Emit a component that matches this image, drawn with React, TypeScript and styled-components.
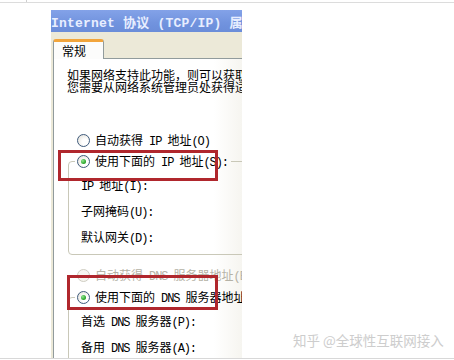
import styled, { createGlobalStyle } from "styled-components";

const GlobalStyle = createGlobalStyle`
  html, body {
    margin: 0;
    padding: 0;
    background: #fff;
  }
  body {
    font-family: "Noto Sans CJK SC", "Liberation Sans", sans-serif;
    color: #000;
  }
`;

const Page = styled.div`
  position: relative;
  width: 454px;
  height: 360px;
  overflow: hidden;
  background: #fff;
  display: flex;
  flex-direction: column;
`;

const TopRule = styled.div`
  height: 2px;
  border-bottom: 1px solid #dcdcdc;
  display: flex;
`;

const Tick = styled.span`
  width: 26px;
  border-right: 1px solid #cfcfcf;
`;

const BottomRule = styled.div`
  border-top: 1px solid #d8d8d8;
`;

const Dialog = styled.div`
  position: relative;
  margin: 7px 0 0 51px;
  width: 191px;
  height: 348px;
  overflow: hidden;
  background: #ece9d8;
  display: flex;
  flex-direction: column;
`;

const TitleBar = styled.div`
  height: 22px;
  flex: none;
  display: flex;
  align-items: center;
  white-space: nowrap;
  background: linear-gradient(#83a2e8, #7193de 60%, #6b8dd9);
  color: #e8eeff;
  font-family: "Liberation Mono", "Noto Sans CJK SC", monospace;
  font-weight: bold;
  font-size: 13px;
  letter-spacing: 0.2px;
`;

const Body = styled.div`
  flex: 1;
  padding-left: 2px;
  display: flex;
  flex-direction: column;
`;

const TabStrip = styled.div`
  height: 26px;
  flex: none;
  display: flex;
  align-items: flex-end;
`;

const Tab = styled.div`
  position: relative;
  z-index: 1;
  box-sizing: border-box;
  width: 51px;
  height: 20px;
  margin-bottom: -1px;
  padding: 1px 0 0 8px;
  background: #fcfcfb;
  border: 1px solid #919b9c;
  border-bottom: none;
  border-top: 3px solid #f2a53c;
  border-radius: 3px 3px 0 0;
  font-size: 12px;
  line-height: 15px;
`;

const Panel = styled.div`
  flex: 1;
  border-left: 1px solid #919b9c;
  border-top: 1px solid #919b9c;
  background: linear-gradient(to right, #fff 85%, #f6f5f0);
  padding: 10px 0 0 13px;
  display: flex;
  flex-direction: column;
  font-size: 12px;
  white-space: nowrap;
`;

const Description = styled.p`
  margin: 0;
  line-height: 12px;
`;

const Lat = styled.span`
  font-family: "Liberation Mono", monospace;
  font-size: 12px;
  letter-spacing: -1.1px;
  white-space: pre;
`;

const RadioRow = styled.div<{ $gap?: number; $disabled?: boolean }>`
  display: flex;
  align-items: center;
  gap: 5px;
  height: 16px;
  margin: ${({ $gap }) => $gap ?? 0}px 0 0 10px;
  color: ${({ $disabled }) => ($disabled ? "#b5b2a6" : "#000")};
`;

const RadioDot = styled.span<{ $checked?: boolean; $disabled?: boolean }>`
  flex: none;
  box-sizing: border-box;
  width: 13px;
  height: 13px;
  border-radius: 50%;
  border: 1px solid ${({ $disabled }) => ($disabled ? "#cfcdc2" : "#3f5b7c")};
  background: ${({ $disabled }) =>
    $disabled ? "#f7f6f0" : "radial-gradient(circle at 65% 65%, #fff 30%, #dedbd2 100%)"};
  display: flex;
  align-items: center;
  justify-content: center;

  &::after {
    content: "";
    display: ${({ $checked }) => ($checked ? "block" : "none")};
    width: 5px;
    height: 5px;
    border-radius: 50%;
    background: radial-gradient(circle at 35% 35%, #8fe58f, #23a023 70%);
  }
`;

const Group = styled.fieldset<{ $gap: number }>`
  box-sizing: border-box;
  width: 320px;
  min-width: 0;
  margin: ${({ $gap }) => $gap}px 0 0 1px;
  padding: 1px 0 4px 6px;
  border: 1px solid #c9c8b8;
  border-radius: 4px;
`;

const Legend = styled.legend`
  padding: 0 3px 0 2px;
  margin: 0;

  ${RadioRow} {
    margin: 0;
  }
`;

const FieldRow = styled.div<{ $first?: boolean }>`
  height: 26px;
  line-height: 26px;
  margin: ${({ $first }) => ($first ? 2 : 0)}px 0 0 6px;
`;

const Highlight = styled.div<{ $left: number; $top: number; $w: number; $h: number }>`
  position: absolute;
  left: ${({ $left }) => $left}px;
  top: ${({ $top }) => $top}px;
  width: ${({ $w }) => $w}px;
  height: ${({ $h }) => $h}px;
  box-sizing: border-box;
  border: 3px solid #b0272d;
  z-index: 2;
`;

const Watermark = styled.div`
  position: absolute;
  left: 293px;
  top: 331px;
  font-size: 13.5px;
  line-height: 18px;
  color: #cdcdcd;
  white-space: nowrap;
`;

export default function App() {
  return (
    <>
      <GlobalStyle />
      <Page>
        <TopRule>
          <Tick />
        </TopRule>
        <Dialog>
          <TitleBar>Internet 协议 (TCP/IP) 属性</TitleBar>
          <Body>
            <TabStrip>
              <Tab>常规</Tab>
            </TabStrip>
            <Panel>
              <Description>
                如果网络支持此功能，则可以获取自动指派的 IP 设置。否则，
                <br />
                您需要从网络系统管理员处获得适当的 IP 设置。
              </Description>

              <RadioRow $gap={39}>
                <RadioDot />
                <span>
                  自动获得<Lat> IP </Lat>地址<Lat>(O)</Lat>
                </span>
              </RadioRow>

              <Group $gap={5}>
                <Legend>
                  <RadioRow>
                    <RadioDot $checked />
                    <span>
                      使用下面的<Lat> IP </Lat>地址<Lat>(S):</Lat>
                    </span>
                  </RadioRow>
                </Legend>
                <FieldRow $first>
                  <Lat>IP </Lat>地址<Lat>(I):</Lat>
                </FieldRow>
                <FieldRow>
                  子网掩码<Lat>(U):</Lat>
                </FieldRow>
                <FieldRow>
                  默认网关<Lat>(D):</Lat>
                </FieldRow>
              </Group>

              <RadioRow $gap={12} $disabled>
                <RadioDot $disabled />
                <span>
                  自动获得<Lat> DNS </Lat>服务器地址<Lat>(B)</Lat>
                </span>
              </RadioRow>

              <Group $gap={6}>
                <Legend>
                  <RadioRow>
                    <RadioDot $checked />
                    <span>
                      使用下面的<Lat> DNS </Lat>服务器地址<Lat>(E):</Lat>
                    </span>
                  </RadioRow>
                </Legend>
                <FieldRow $first>
                  首选<Lat> DNS </Lat>服务器<Lat>(P):</Lat>
                </FieldRow>
                <FieldRow>
                  备用<Lat> DNS </Lat>服务器<Lat>(A):</Lat>
                </FieldRow>
              </Group>
            </Panel>
          </Body>
          <Highlight $left={7} $top={140} $w={160} $h={31} />
          <Highlight $left={16} $top={265} $w={151} $h={35} />
        </Dialog>
        <BottomRule />
        <Watermark>知乎 @全球性互联网接入</Watermark>
      </Page>
    </>
  );
}
